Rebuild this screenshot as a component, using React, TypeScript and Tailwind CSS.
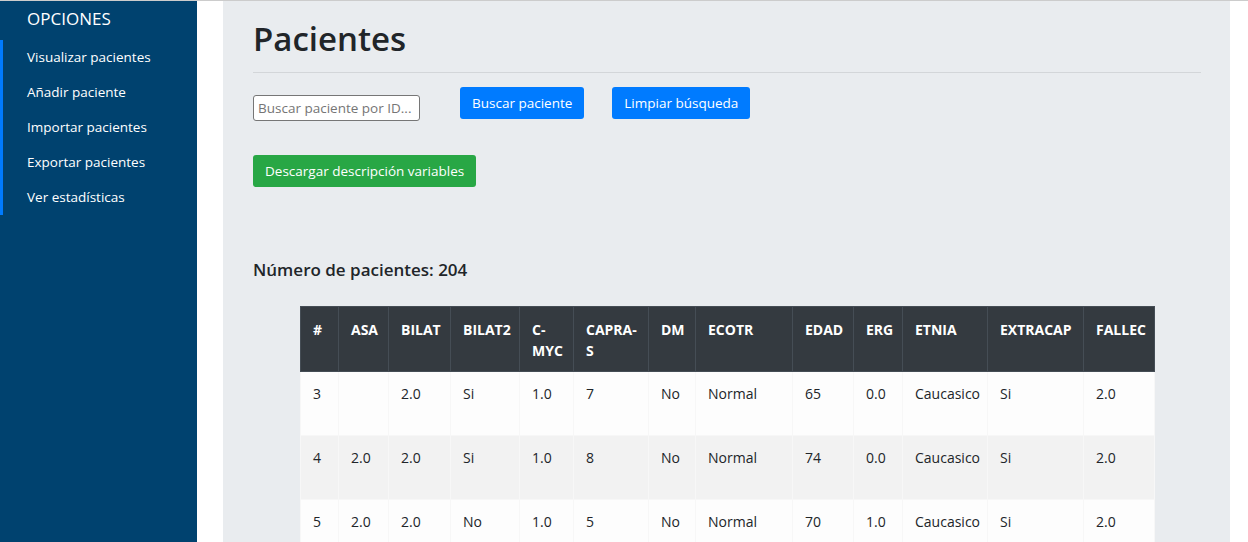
import React from "react";

const cols = [
  { h: "#", w: 38 },
  { h: "ASA", w: 50 },
  { h: "BILAT", w: 62 },
  { h: "BILAT2", w: 69 },
  { h: "C-\nMYC", w: 54 },
  { h: "CAPRA-\nS", w: 75 },
  { h: "DM", w: 47 },
  { h: "ECOTR", w: 97 },
  { h: "EDAD", w: 61 },
  { h: "ERG", w: 49 },
  { h: "ETNIA", w: 85 },
  { h: "EXTRACAP", w: 96 },
  { h: "FALLEC", w: 71 },
];

const rows = [
  ["3", "", "2.0", "Si", "1.0", "7", "No", "Normal", "65", "0.0", "Caucasico", "Si", "2.0"],
  ["4", "2.0", "2.0", "Si", "1.0", "8", "No", "Normal", "74", "0.0", "Caucasico", "Si", "2.0"],
  ["5", "2.0", "2.0", "No", "1.0", "5", "No", "Normal", "70", "1.0", "Caucasico", "Si", "2.0"],
];

export default function App() {
  return (
    <div
      className="flex h-[542px] w-[1248px] overflow-hidden border-t border-[#cccccc] bg-white text-[#212529]"
      style={{ fontFamily: '"Open Sans", "Noto Sans", sans-serif' }}
    >
      <aside className="w-[197px] shrink-0 bg-[#00426f] text-white">
        <div className="pl-[27px] pt-[6px] text-[17px] leading-[24px]">OPCIONES</div>
        <ul className="mt-[9px] border-l-[3px] border-[#007bff]">
          {["Visualizar pacientes", "Añadir paciente", "Importar pacientes", "Exportar pacientes", "Ver estadísticas"].map((t) => (
            <li key={t} className="flex h-[35px] items-center pl-[24px] text-[13.5px]">
              {t}
            </li>
          ))}
        </ul>
      </aside>
      <div className="w-[26px] shrink-0" />
      <main className="w-[1007px] shrink-0 bg-[#e9ecef] pl-[30px] pr-[29px]">
        <h1 className="mt-[14px] text-[33px] font-semibold leading-[48px] text-[#212529]">Pacientes</h1>
        <hr className="mt-[9px] border-t border-[#d3d6d9]" />
        <div className="mt-[14px] flex items-start">
          <input
            className="mt-[8px] h-[26px] w-[167px] rounded-[3px] border border-[#767676] bg-white px-[4px] text-[13.5px] placeholder:text-[#757575]"
            placeholder="Buscar paciente por ID..."
          />
          <button className="ml-[40px] h-[32px] rounded-[3px] bg-[#007bff] px-[12px] text-[13.5px] text-white">
            Buscar paciente
          </button>
          <button className="ml-[28px] h-[32px] rounded-[3px] bg-[#007bff] px-[12px] text-[13.5px] text-white">
            Limpiar búsqueda
          </button>
        </div>
        <button className="mt-[35px] h-[32px] -translate-y-[1px] rounded-[3px] bg-[#28a745] px-[12px] text-[13.5px] text-white">
          Descargar descripción variables
        </button>
        <div className="mt-[70px] text-[17px] font-semibold leading-[24px]">Número de pacientes: 204</div>
        <table className="ml-[47px] mt-[24px] w-[854px] table-fixed border-collapse text-[14px]">
          <colgroup>
            {cols.map((c) => (
              <col key={c.h} style={{ width: c.w }} />
            ))}
          </colgroup>
          <thead>
            <tr className="bg-[#343a40] text-white">
              {cols.map((c) => (
                <th
                  key={c.h}
                  className="h-[65px] whitespace-pre border border-[#454d55] px-[12px] pt-[12px] text-left align-top font-bold leading-[21px]"
                >
                  {c.h}
                </th>
              ))}
            </tr>
          </thead>
          <tbody>
            {rows.map((r, i) => (
              <tr key={i} className={i % 2 === 1 ? "bg-[#f2f2f2]" : "bg-[#fdfdfd]"}>
                {r.map((v, j) => (
                  <td
                    key={j}
                    className="h-[64px] border border-[#f7f7f7] px-[12px] pt-[11px] align-top leading-[21px]"
                  >
                    {v}
                  </td>
                ))}
              </tr>
            ))}
          </tbody>
        </table>
      </main>
      <div className="flex-1 bg-white" />
    </div>
  );
}
